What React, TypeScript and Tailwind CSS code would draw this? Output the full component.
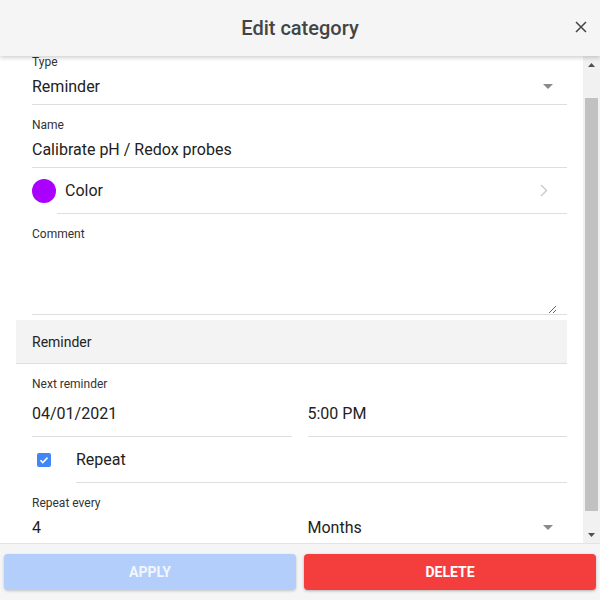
import React, { useLayoutEffect, useRef } from "react";

const font = { fontFamily: "Roboto, 'Liberation Sans', sans-serif" };

function Arrow() {
  return (
    <svg width="10" height="5" viewBox="0 0 10 5" className="shrink-0">
      <path d="M0 0h10L5 5z" fill="#8a8a8a" />
    </svg>
  );
}

function Field({ label, value, select }: { label: string; value: string; select?: boolean }) {
  return (
    <div className="pt-[13px] border-b border-[#dedede]">
      <div className="text-xs leading-[14px] text-[#333]">{label}</div>
      <div className="h-[35px] flex items-center justify-between pr-[14px]">
        <span className="text-base text-[#222]">{value}</span>
        {select && <Arrow />}
      </div>
    </div>
  );
}

// looks like the classic chrome scrollbar
function ScrollBar() {
  return (
    <div className="w-[17px] shrink-0 flex flex-col bg-[#f1f1f1]">
      <div className="h-[17px] flex items-center justify-center">
        <svg width="7" height="4" viewBox="0 0 7 4">
          <path d="M0 4h7L3.5 0z" fill="#505050" />
        </svg>
      </div>
      <div className="flex-1 pt-[25px] px-[2px]">
        <div className="h-[413px] bg-[#c1c1c1]" />
      </div>
      <div className="h-[17px] flex items-center justify-center">
        <svg width="7" height="4" viewBox="0 0 7 4">
          <path d="M0 0h7L3.5 4z" fill="#505050" />
        </svg>
      </div>
    </div>
  );
}

export default function App() {
  const scroller = useRef<HTMLDivElement>(null);

  useLayoutEffect(() => {
    if (scroller.current) scroller.current.scrollTop = 30;
  }, []);

  return (
    <div className="w-[600px] h-[600px] flex flex-col bg-white text-[#222]" style={font}>
      {/* header */}
      <div className="relative z-10 h-14 shrink-0 flex items-center justify-center bg-[#f5f5f5] shadow-[0_2px_4px_rgba(0,0,0,0.18)]">
        <h1 className="text-xl font-medium text-[#444]">Edit category</h1>
        <button className="absolute right-[13px] top-[21px] w-3 h-3 flex items-center justify-center">
          <svg width="12" height="12" viewBox="0 0 12 12">
            <path d="M1 1l10 10M11 1L1 11" stroke="#444" strokeWidth="1.5" />
          </svg>
        </button>
      </div>

      {/* body */}
      <div className="flex-1 min-h-0 flex">
        <div ref={scroller} className="flex-1 overflow-hidden">
          <div className="pt-4 pb-2 pl-4 pr-4">
            <div className="ml-4">
              <Field label="Type" value="Reminder" select />
              <Field label="Name" value="Calibrate pH / Redox probes" />

              <div className="flex items-stretch">
                <div className="w-6 flex items-center">
                  <div className="w-6 h-6 rounded-full bg-[#aa00ff]" />
                </div>
                <div className="flex-1 h-[46px] ml-px pl-2 flex items-center justify-between border-b border-[#dedede] pr-[19px]">
                  <span className="text-base text-[#222]">Color</span>
                  <svg width="8" height="13" viewBox="0 0 8 13">
                    <path d="M1 1l5.5 5.5L1 12" stroke="#cfcfcf" strokeWidth="1.6" fill="none" />
                  </svg>
                </div>
              </div>

              <div className="pt-[13px] border-b border-[#dedede]">
                <div className="text-xs leading-[14px] text-[#333]">Comment</div>
                <textarea
                  className="block w-[calc(100%-10px)] h-[73px] resize-y bg-transparent outline-none text-base"
                  style={font}
                />
              </div>
            </div>

            <div className="mt-[5px] h-[44px] flex items-center pl-4 bg-[#f3f3f3] border-b border-[#dedede]">
              <span className="text-sm text-[#222]">Reminder</span>
            </div>

            <div className="ml-4">
              <div className="pt-[13px]">
                <div className="text-xs leading-[14px] text-[#333]">Next reminder</div>
                <div className="grid grid-cols-2 gap-4">
                  <div className="h-[46px] flex items-center border-b border-[#dedede]">
                    <span className="text-base">04/01/2021</span>
                  </div>
                  <div className="h-[46px] flex items-center border-b border-[#dedede]">
                    <span className="text-base">5:00 PM</span>
                  </div>
                </div>
              </div>

              <div className="flex items-stretch">
                <div className="w-[44px] flex items-center pl-[5px]">
                  <div className="w-[14px] h-[14px] rounded-[2px] bg-[#4285f4] flex items-center justify-center">
                    <svg width="10" height="10" viewBox="0 0 10 10">
                      <path d="M1.5 5.2l2.3 2.3L8.5 2.6" stroke="#fff" strokeWidth="1.6" fill="none" />
                    </svg>
                  </div>
                </div>
                <div className="flex-1 h-[46px] flex items-center border-b border-[#dedede]">
                  <span className="text-base">Repeat</span>
                </div>
              </div>

              <div className="pt-[13px]">
                <div className="text-xs leading-[14px] text-[#333]">Repeat every</div>
                <div className="grid grid-cols-2 gap-4">
                  <div className="h-[36px] flex items-center border-b border-[#dedede]">
                    <span className="text-base">4</span>
                  </div>
                  <div className="h-[36px] flex items-center justify-between pr-[14px] border-b border-[#dedede]">
                    <span className="text-base">Months</span>
                    <Arrow />
                  </div>
                </div>
              </div>
            </div>
          </div>
        </div>
        <ScrollBar />
      </div>

      {/* footer */}
      <div className="h-[57px] shrink-0 flex gap-2 px-1 py-[10px] bg-[#f5f5f5] border-t border-[#e3e3e3]">
        <button className="flex-1 rounded bg-[#b3cefb] text-[#f2f6fe] text-sm font-bold uppercase shadow-[0_1px_3px_rgba(0,0,0,0.2)]">
          Apply
        </button>
        <button className="flex-1 rounded bg-[#f43e3e] text-white text-sm font-bold uppercase shadow-[0_1px_3px_rgba(0,0,0,0.3)]">
          Delete
        </button>
      </div>
    </div>
  );
}
